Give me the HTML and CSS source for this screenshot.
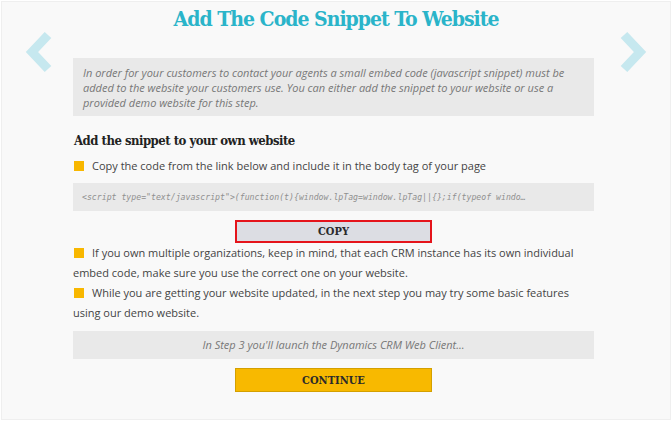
FILE: index.html
```html
<!DOCTYPE html>
<html>
<head>
<meta charset="utf-8">
<link rel="stylesheet" href="styles.css">
</head>
<body>
<div class="panel">
  <svg class="nav nav-prev" width="34" height="44" viewBox="0 0 34 44"><path d="M27 5 L11 22 L27 39" fill="none" stroke="#c6e8ef" stroke-width="9"/></svg>
  <svg class="nav nav-next" width="34" height="44" viewBox="0 0 34 44"><path d="M7 5 L23 22 L7 39" fill="none" stroke="#c6e8ef" stroke-width="9"/></svg>
  <h1 class="title">Add The Code Snippet To Website</h1>
  <div class="content">
    <div class="info">In order for your customers to contact your agents a small embed code (javascript snippet) must be added to the website your customers use. You can either add the snippet to your website or use a provided demo website for this step.</div>
    <h2 class="subtitle">Add the snippet to your own website</h2>
    <p class="bullet"><span class="sq"></span>Copy the code from the link below and include it in the body tag of your page</p>
    <div class="code">&lt;script type="text/javascript"&gt;(function(t){window.lpTag=window.lpTag||{};if(typeof windo…</div>
    <div class="btn-row"><button class="btn btn-copy">COPY</button></div>
    <p class="bullet"><span class="sq"></span>If you own multiple organizations, keep in mind, that each CRM instance has its own individual embed code, make sure you use the correct one on your website.</p>
    <p class="bullet"><span class="sq"></span>While you are getting your website updated, in the next step you may try some basic features using our demo website.</p>
    <div class="step">In Step 3 you'll launch the Dynamics CRM Web Client...</div>
    <div class="btn-row"><button class="btn btn-continue">CONTINUE</button></div>
  </div>
</div>
</body>
</html>
```
FILE: styles.css
```css
html, body {
  margin: 0;
  padding: 0;
  background: #ffffff;
}
.panel {
  position: relative;
  margin: 1px;
  height: 419px;
  box-sizing: border-box;
  border: 1px solid #efefef;
  background: #f9f9f9;
  font-family: "Open Sans", sans-serif;
}
.nav {
  position: absolute;
  top: 28px;
}
.nav-prev { left: 19px; }
.nav-next { left: 615px; }
.title {
  margin: 0;
  padding-top: 3px;
  text-align: center;
  font-family: "DejaVu Serif Condensed", "DejaVu Serif", serif;
  font-weight: bold;
  font-size: 21px;
  letter-spacing: -1px;
  line-height: 28px;
  color: #2ab4c9;
}
.content {
  margin: 25px 0 0 71px;
  width: 521px;
}
.info {
  background: #e9e9e9;
  padding: 7px 10px 6px 10px;
  font-style: italic;
  font-size: 11px;
  line-height: 15px;
  color: #777;
}
.subtitle {
  margin: 16px 0 0 1px;
  font-family: "DejaVu Serif Condensed", "DejaVu Serif", serif;
  font-weight: bold;
  font-size: 13px;
  letter-spacing: -0.5px;
  line-height: 18px;
  color: #222;
}
.bullet {
  margin: 0;
  font-size: 11px;
  line-height: 20px;
  color: #444;
}
.subtitle + .bullet { margin-top: 6px; }
.sq {
  display: inline-block;
  width: 10px;
  height: 10px;
  background: #f8b700;
  margin: 0 8px 0 1px;
  vertical-align: -1px;
}
.code {
  margin-top: 7px;
  background: #e9e9e9;
  height: 28px;
  padding: 0 9px;
  font-family: "DejaVu Sans Mono", monospace;
  font-style: italic;
  font-size: 8.2px;
  line-height: 28px;
  color: #909090;
  white-space: nowrap;
  overflow: hidden;
}
.btn-row {
  display: flex;
  justify-content: center;
}
.btn {
  width: 197px;
  padding: 0;
  font-family: "DejaVu Serif Condensed", "DejaVu Serif", serif;
  font-weight: bold;
  font-size: 11px;
  color: #2a2a2a;
  cursor: pointer;
}
.btn-copy {
  height: 23px;
  margin: 9px 0 0;
  background: #dcdde3;
  border: 2px solid #e5141b;
  outline: none;
}
.step {
  margin-top: 8px;
  background: #e9e9e9;
  height: 28px;
  text-align: center;
  font-style: italic;
  font-size: 11px;
  line-height: 28px;
  color: #777;
}
.btn-continue {
  height: 24px;
  margin-top: 9px;
  background: #f8b900;
  border: 1px solid #d4a000;
}
```
